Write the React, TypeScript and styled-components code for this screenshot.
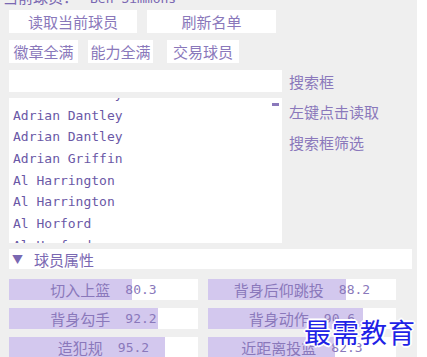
import styled, { createGlobalStyle } from "styled-components";

const GlobalStyle = createGlobalStyle`
  html, body {
    margin: 0;
    padding: 0;
    background: #ffffff;
  }
  body {
    font-family: "Noto Sans CJK SC", "Noto Sans", sans-serif;
  }
`;

const players = [
  "Adrian Dantley",
  "Adrian Dantley",
  "Adrian Dantley",
  "Adrian Griffin",
  "Al Harrington",
  "Al Harrington",
  "Al Horford",
  "Al Horford",
  "Al Jefferson",
];

const attributes = [
  { name: "切入上篮", value: "80.3", fill: 65 },
  { name: "背身后仰跳投", value: "88.2", fill: 73.5 },
  { name: "背身勾手", value: "92.2", fill: 79 },
  { name: "背身动作", value: "90.6", fill: 82.5 },
  { name: "造犯规", value: "95.2", fill: 82.5 },
  { name: "近距离投篮", value: "82.3", fill: 67.5 },
];

const App = () => {
  return (
    <>
      <GlobalStyle />
      <Page>
        <Header>
          当前球员：<HeaderName>Ben Simmons</HeaderName>
        </Header>
        <ButtonRow>
          <Button $w={128}>读取当前球员</Button>
          <Button $w={129}>刷新名单</Button>
        </ButtonRow>
        <ButtonRow $top={7}>
          <Button $w={69}>徽章全满</Button>
          <Button $w={65}>能力全满</Button>
          <Button $w={72} style={{ marginLeft: 4 }}>
            交易球员
          </Button>
        </ButtonRow>
        <SearchRow>
          <SearchInput />
          <SideLabel>搜索框</SideLabel>
        </SearchRow>
        <ListRow>
          <ListBox>
            <ListInner>
              {players.map((p, i) => (
                <ListItem key={i}>{p}</ListItem>
              ))}
            </ListInner>
            <ScrollMark />
          </ListBox>
          <Hints>
            <SideLabel>左键点击读取</SideLabel>
            <SideLabel>搜索框筛选</SideLabel>
          </Hints>
        </ListRow>
        <SectionHeader>
          <Arrow>▼</Arrow>
          <span>球员属性</span>
        </SectionHeader>
        <AttrGrid>
          {attributes.map((a) => (
            <AttrCell key={a.name}>
              <AttrFill style={{ width: `${a.fill}%` }} />
              <AttrText>
                {a.name}
                <AttrValue>{a.value}</AttrValue>
              </AttrText>
            </AttrCell>
          ))}
        </AttrGrid>
        <Watermark>最需教育</Watermark>
      </Page>
    </>
  );
};

export default App;

const Page = styled.div`
  position: relative;
  width: 417px;
  height: 357px;
  overflow: hidden;
  background: #efefef;
  box-sizing: border-box;
  padding: 0 0 0 9px;
  color: #7a68b2;
`;

const Header = styled.div`
  margin: -11px 0 0 -6px;
  height: 16px;
  line-height: 16px;
  font-size: 15px;
  color: #7a68b2;
  white-space: nowrap;
`;

const HeaderName = styled.span`
  margin-left: 12px;
  font-family: "DejaVu Sans Mono", monospace;
  font-size: 13px;
`;

const ButtonRow = styled.div<{ $top?: number }>`
  display: flex;
  gap: 10px;
  margin-top: ${(p) => p.$top ?? 5}px;
  height: 23px;
`;

const Button = styled.div<{ $w: number }>`
  width: ${(p) => p.$w}px;
  height: 23px;
  background: #ffffff;
  color: #8a78bb;
  font-size: 15px;
  display: flex;
  align-items: center;
  justify-content: center;
  white-space: nowrap;
`;

const SearchRow = styled.div`
  display: flex;
  align-items: center;
  gap: 7px;
  margin-top: 7px;
`;

const SearchInput = styled.div`
  width: 273px;
  height: 22px;
  background: #ffffff;
`;

const SideLabel = styled.div`
  font-size: 15px;
  color: #8a78bb;
  white-space: nowrap;
`;

const ListRow = styled.div`
  display: flex;
  gap: 7px;
  margin-top: 6px;
`;

const ListBox = styled.div`
  position: relative;
  width: 273px;
  height: 145px;
  background: #ffffff;
  overflow: hidden;
`;

const ListInner = styled.div`
  margin-top: -15px;
  padding-left: 4px;
`;

const ListItem = styled.div`
  height: 21.7px;
  line-height: 21.7px;
  font-family: "DejaVu Sans Mono", monospace;
  font-size: 13px;
  color: #6a58a6;
  white-space: nowrap;
`;

const ScrollMark = styled.div`
  position: absolute;
  top: 5px;
  right: 3px;
  width: 7px;
  height: 3px;
  background: #8a78bb;
`;

const Hints = styled.div`
  display: flex;
  flex-direction: column;
  gap: 10px;
  padding-top: 3px;
`;

const SectionHeader = styled.div`
  margin-top: 6px;
  width: 403px;
  height: 20px;
  background: #ffffff;
  display: flex;
  align-items: center;
  font-size: 15px;
  color: #7a68b2;
`;

const Arrow = styled.span`
  font-size: 11px;
  margin: 0 11px 0 3px;
`;

const AttrGrid = styled.div`
  display: grid;
  grid-template-columns: 189px 188px;
  column-gap: 10px;
  row-gap: 8px;
  margin-top: 10px;
`;

const AttrCell = styled.div`
  position: relative;
  height: 21px;
  background: #ffffff;
  overflow: hidden;
`;

const AttrFill = styled.div`
  position: absolute;
  left: 0;
  top: 0;
  bottom: 0;
  background: #d3c8ee;
`;

const AttrText = styled.div`
  position: relative;
  height: 100%;
  display: flex;
  align-items: center;
  justify-content: center;
  font-size: 15px;
  color: #8a78bb;
  white-space: nowrap;
`;

const AttrValue = styled.span`
  margin-left: 15px;
  font-family: "DejaVu Sans Mono", monospace;
  font-size: 13px;
`;

const Watermark = styled.div`
  position: absolute;
  left: 304px;
  top: 312px;
  font-family: "Noto Sans CJK SC", sans-serif;
  font-size: 27px;
  letter-spacing: 1px;
  color: #1e22e6;
  text-shadow: 1px 1px 0 #fff, -1px -1px 0 #fff, 1px -1px 0 #fff,
    -1px 1px 0 #fff, 2px 0 0 #fff, -2px 0 0 #fff, 0 2px 0 #fff, 0 -2px 0 #fff;
  white-space: nowrap;
`;
